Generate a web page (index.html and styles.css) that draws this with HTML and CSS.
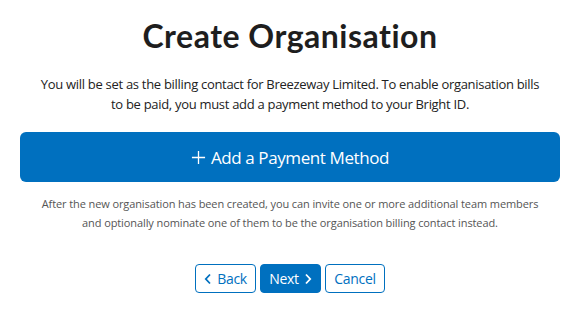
FILE: index.html
```html
<!DOCTYPE html>
<html lang="en">
<head>
  <meta charset="UTF-8">
  <title>Create Organisation</title>
  <link rel="stylesheet" href="styles.css">
</head>
<body>
  <div class="page">
    <h1 class="title">Create Organisation</h1>
    <p class="intro">You will be set as the billing contact for Breezeway Limited. To enable organisation bills to be paid, you must add a payment method to your Bright ID.</p>
    <button class="add-payment">
      <svg class="plus" width="15" height="15" viewBox="0 0 16 16"><path d="M8 1v14M1 8h14" stroke="#fff" stroke-width="1.4" fill="none"/></svg>
      Add a Payment Method
    </button>
    <p class="note">After the new organisation has been created, you can invite one or more additional team members and optionally nominate one of them to be the organisation billing contact instead.</p>
    <div class="actions">
      <button class="btn outline">
        <svg width="8" height="12" viewBox="0 0 8 12"><path d="M6 1.5L1.8 6L6 10.5" stroke="currentColor" stroke-width="1.8" fill="none"/></svg>
        Back
      </button>
      <button class="btn primary">
        Next
        <svg width="8" height="12" viewBox="0 0 8 12"><path d="M2 1.5L6.2 6L2 10.5" stroke="currentColor" stroke-width="1.8" fill="none"/></svg>
      </button>
      <button class="btn outline cancel">Cancel</button>
    </div>
  </div>
</body>
</html>
```

FILE: styles.css
```css
body {
  margin: 0;
  font-family: "Open Sans", Arial, sans-serif;
  background-color: #fff;
  color: #222;
}
.page {
  width: 540px;
  margin-left: 20px;
  padding-top: 16px;
  text-align: center;
}
.title {
  margin: 0;
  font-family: Lato, "Open Sans", sans-serif;
  font-weight: 700;
  font-size: 32px;
  letter-spacing: 0.5px;
  line-height: 40px;
  color: #1e1e1e;
}
.intro {
  margin: 18px 0 0;
  padding: 0 18px;
  font-size: 13px;
  letter-spacing: -0.3px;
  line-height: 20px;
}
.add-payment {
  display: flex;
  align-items: center;
  justify-content: center;
  gap: 5px;
  width: 100%;
  height: 50px;
  margin-top: 18px;
  border: none;
  border-radius: 6px;
  background-color: #0070bf;
  color: white;
  font-family: "Open Sans", Arial, sans-serif;
  font-size: 17px;
  letter-spacing: -0.4px;
}
.note {
  margin: 12px 0 0;
  padding: 0 18px;
  font-size: 11px;
  letter-spacing: -0.1px;
  line-height: 19px;
  color: #555;
}
.actions {
  display: flex;
  justify-content: center;
  gap: 4px;
  margin-top: 32px;
}
.btn {
  display: flex;
  align-items: center;
  justify-content: center;
  gap: 5px;
  width: 61px;
  height: 29px;
  padding: 0;
  border: 1px solid #0070bf;
  border-radius: 4px;
  font-family: "Open Sans", Arial, sans-serif;
  font-size: 14px;
  letter-spacing: -0.3px;
}
.btn.cancel {
  width: 60px;
}
.btn.outline {
  background-color: white;
  color: #0070bf;
}
.btn.primary {
  background-color: #0070bf;
  color: white;
}
```
